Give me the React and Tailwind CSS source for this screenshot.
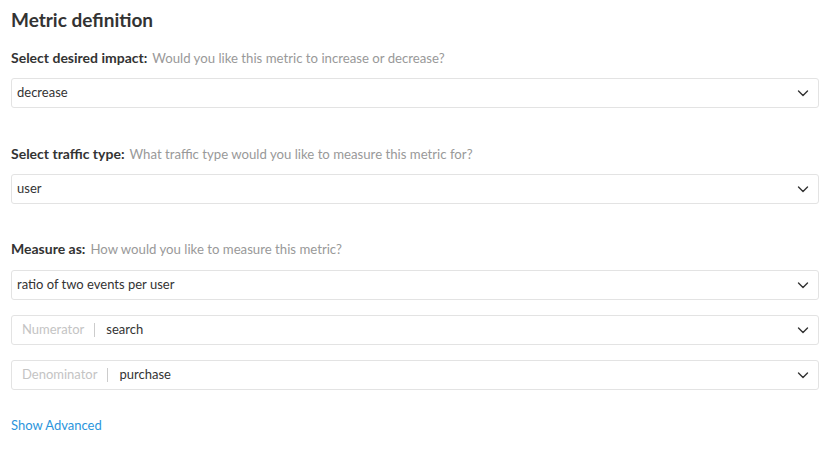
import React from "react";

const Chevron = () => (
  <svg width="14" height="14" viewBox="0 0 14 14" fill="none" className="shrink-0">
    <path d="M2.5 5l4.5 4.5L11.5 5" stroke="#333" strokeWidth="1.4" strokeLinecap="round" strokeLinejoin="round" />
  </svg>
);

const Select = ({ children }) => (
  <div className="flex items-center h-[30px] border border-[#e3e3e3] rounded-[3px] pl-[5px] pr-[8px] text-[13px] text-[#333] bg-white">
    <div className="flex-1 flex items-center">{children}</div>
    <Chevron />
  </div>
);

const Label = ({ bold, hint }) => (
  <div className="leading-[18px] flex items-baseline gap-[5px]">
    <span className="font-bold text-[14px] text-[#333]">{bold}</span>
    <span className="text-[13.2px] text-[#999]">{hint}</span>
  </div>
);

const Pair = ({ label, value }) => (
  <Select>
    <span className="text-[#c4c4c4] pl-[5px]">{label}</span>
    <span className="w-px h-[14px] bg-[#ccc] ml-[10px] mr-[11px]"></span>
    <span>{value}</span>
  </Select>
);

export default function App() {
  return (
    <div className="w-[830px] h-[461px] bg-white px-[11px] pt-[8px]" style={{ fontFamily: "Lato, 'Noto Sans', sans-serif" }}>
      <h1 className="text-[19px] leading-[24px] font-bold text-[#333]">Metric definition</h1>
      <div className="mt-[17px]">
        <Label bold="Select desired impact:" hint="Would you like this metric to increase or decrease?" />
      </div>
      <div className="mt-[11px]">
        <Select>decrease</Select>
      </div>
      <div className="mt-[37px]">
        <Label bold="Select traffic type:" hint="What traffic type would you like to measure this metric for?" />
      </div>
      <div className="mt-[11px]">
        <Select>user</Select>
      </div>
      <div className="mt-[36px]">
        <Label bold="Measure as:" hint="How would you like to measure this metric?" />
      </div>
      <div className="mt-[12px] flex flex-col gap-[15px]">
        <Select>ratio of two events per user</Select>
        <Pair label="Numerator" value="search" />
        <Pair label="Denominator" value="purchase" />
      </div>
      <div className="mt-[26px] text-[13px] text-[#2b95dc]">Show Advanced</div>
    </div>
  );
}
